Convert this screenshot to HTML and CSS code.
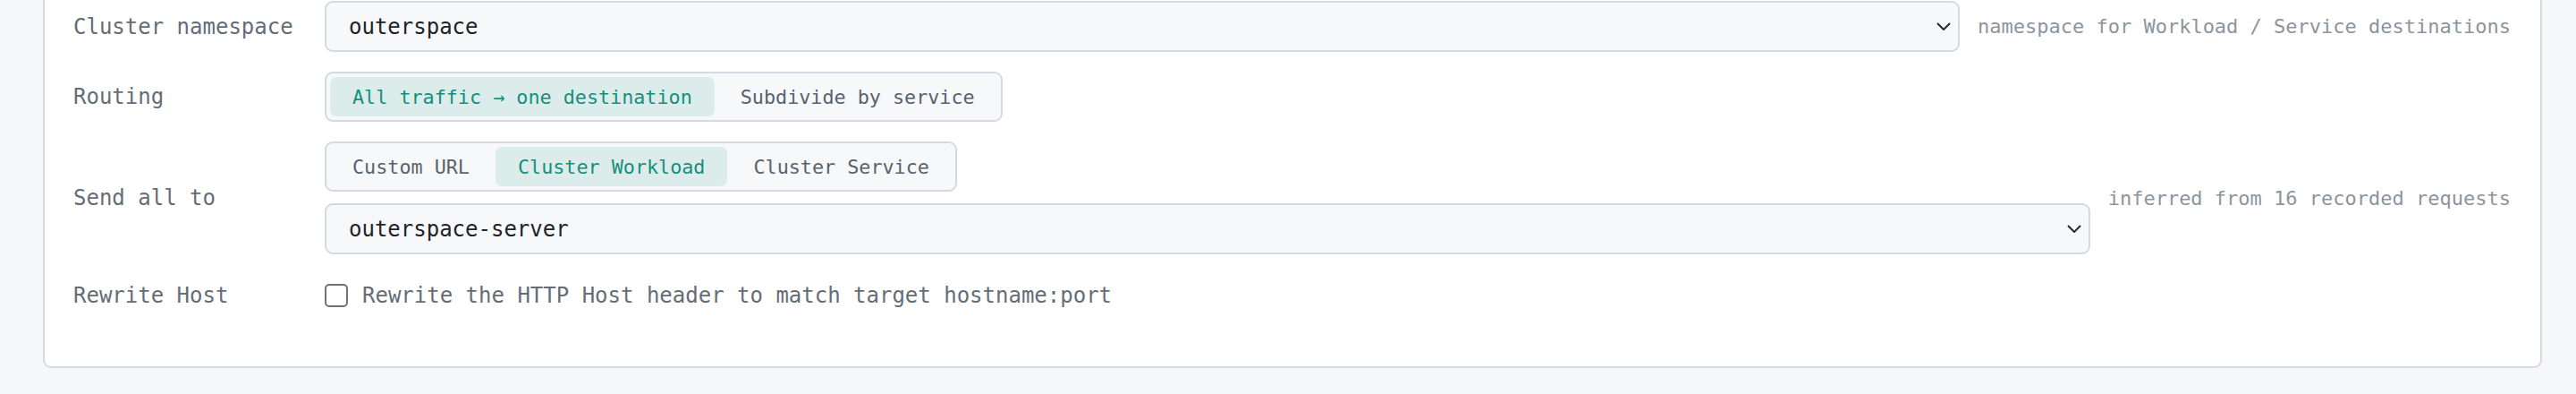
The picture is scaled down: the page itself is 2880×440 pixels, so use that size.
FILE: index.html
```html
<!DOCTYPE html>
<html lang="en">
<head>
  <meta charset="UTF-8" />
  <meta name="viewport" content="width=device-width, initial-scale=1.0"/>
  <title>Destination settings</title>
  <link rel="stylesheet" href="styles.css">
</head>
<body>
  <div class="card">
    <div class="rows">

      <!-- namespace -->
      <div class="row">
        <div class="label">Cluster namespace</div>
        <div class="control">
          <div class="select">
            <span>outerspace</span>
            <svg class="chevron" width="16" height="9" viewBox="0 0 16 9"><polyline points="1,1 8,8 15,1" fill="none" stroke="#24292f" stroke-width="2"/></svg>
          </div>
        </div>
        <div class="hint">namespace for Workload / Service destinations</div>
      </div>

      <!-- routing -->
      <div class="row">
        <div class="label">Routing</div>
        <div class="control">
          <div class="segmented">
            <button class="seg active">All traffic → one destination</button>
            <button class="seg">Subdivide by service</button>
          </div>
        </div>
      </div>

      <!-- destination -->
      <div class="row">
        <div class="label">Send all to</div>
        <div class="control stack">
          <div class="segmented">
            <button class="seg">Custom URL</button>
            <button class="seg active">Cluster Workload</button>
            <button class="seg">Cluster Service</button>
          </div>
          <div class="select">
            <span>outerspace-server</span>
            <svg class="chevron" width="16" height="9" viewBox="0 0 16 9"><polyline points="1,1 8,8 15,1" fill="none" stroke="#24292f" stroke-width="2"/></svg>
          </div>
        </div>
        <div class="hint">inferred from 16 recorded requests</div>
      </div>

      <!-- host header -->
      <div class="row last">
        <div class="label">Rewrite Host</div>
        <label class="control check">
          <span class="box"></span>
          <span>Rewrite the HTTP Host header to match target hostname:port</span>
        </label>
      </div>

    </div>
  </div>
</body>
</html>
```

FILE: styles.css
```css
body {
  margin: 0;
  padding: 0 38px 0 48px;
  background: #f5f7f9;
  font-family: 'DejaVu Sans Mono', 'Liberation Mono', monospace;
  color: #656d76;
}

.card {
  background: #fff;
  border: 2px solid #d3dae2;
  border-top: none;
  border-radius: 0 0 9px 9px;
  padding: 1px 33px 55px 32px;
}

.rows {
  display: flex;
  flex-direction: column;
  gap: 22px;
}

.row {
  display: flex;
  align-items: center;
  gap: 20px;
}

.row.last {
  min-height: 48px;
}

.label {
  width: 261px;
  flex-shrink: 0;
  font-size: 24px;
  color: #656d76;
}

.control {
  flex: 1;
  min-width: 0;
}

.stack {
  display: flex;
  flex-direction: column;
  align-items: flex-start;
  gap: 13px;
}

.stack .select {
  align-self: stretch;
}

.select {
  display: flex;
  align-items: center;
  justify-content: space-between;
  height: 57px;
  box-sizing: border-box;
  padding: 0 8px 0 25px;
  background: #f6f8fa;
  border: 2px solid #d3dae2;
  border-radius: 9px;
  font-size: 24px;
  color: #1f2328;
}

.hint {
  font-size: 22px;
  color: #8c959f;
  white-space: nowrap;
}

.segmented {
  display: inline-flex;
  gap: 4px;
  padding: 4px;
  background: #f6f8fa;
  border: 2px solid #d3dae2;
  border-radius: 9px;
}

.seg {
  height: 44px;
  padding: 0 25px;
  border: none;
  border-radius: 7px;
  background: transparent;
  font-family: inherit;
  font-size: 21.75px;
  color: #59636e;
  cursor: pointer;
}

.seg.active {
  background: #dcecea;
  color: #16907d;
}

.check {
  display: flex;
  align-items: center;
  gap: 16px;
  font-size: 24px;
  color: #656d76;
}

.box {
  width: 26px;
  height: 26px;
  box-sizing: border-box;
  border: 2px solid #6e7175;
  border-radius: 5px;
  background: #fff;
}
```
